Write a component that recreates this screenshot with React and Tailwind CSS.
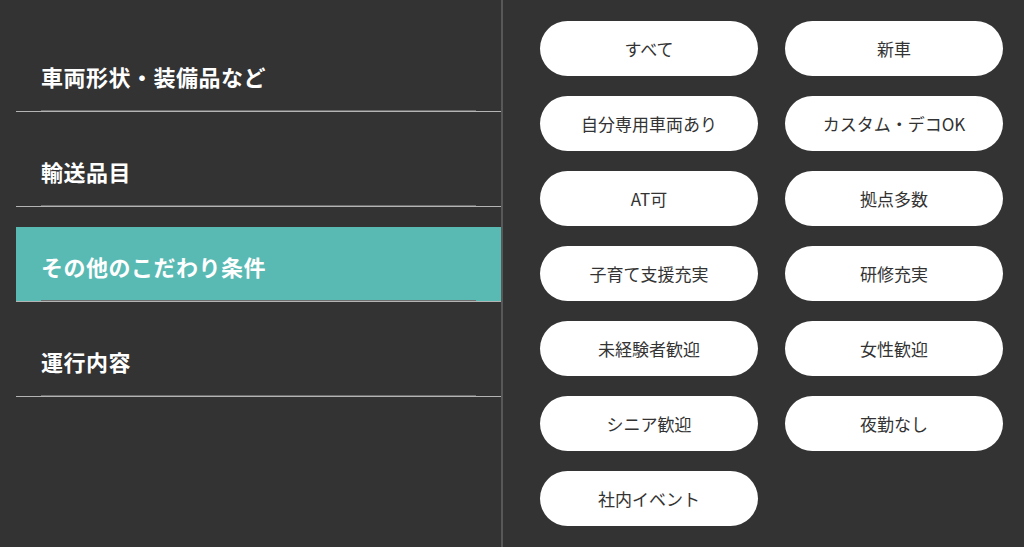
import React from 'react';

const categories = [
  { label: '車両形状・装備品など', active: false },
  { label: '輸送品目', active: false },
  { label: 'その他のこだわり条件', active: true },
  { label: '運行内容', active: false },
];

const options = [
  'すべて',
  '新車',
  '自分専用車両あり',
  'カスタム・デコOK',
  'AT可',
  '拠点多数',
  '子育て支援充実',
  '研修充実',
  '未経験者歓迎',
  '女性歓迎',
  'シニア歓迎',
  '夜勤なし',
  '社内イベント',
];

export default function App() {
  return (
    <div
      className="flex w-[1024px] h-[547px] bg-[#333333] overflow-hidden"
      style={{ fontFamily: '"Noto Sans CJK JP", "Noto Sans", sans-serif' }}
    >
      {/* Left: category list */}
      <div className="w-[503px] shrink-0 border-r-2 border-[#585858] pl-[16px] pt-[37px]">
        <ul className="flex flex-col gap-[20px]">
          {categories.map((c) => (
            <li
              key={c.label}
              className={`border-b border-[#b4b4b4] ${c.active ? 'bg-[#59b9b3]' : ''}`}
            >
              <div className="mx-[25px] h-[74px] flex items-center pt-[6px] border-b border-[#6e6e6e]">
                <span className="text-[22px] font-bold text-white tracking-[0.5px]">
                  {c.label}
                </span>
              </div>
            </li>
          ))}
        </ul>
      </div>

      {/* Right: option buttons */}
      <div className="flex-1 pl-[37px] pt-[21px]">
        <div className="grid grid-cols-[218px_218px] gap-x-[27px] gap-y-[20px]">
          {options.map((o) => (
            <button
              key={o}
              className="h-[55px] rounded-full bg-white text-[#333333] text-[17px] flex items-center justify-center"
            >
              {o}
            </button>
          ))}
        </div>
      </div>
    </div>
  );
}
